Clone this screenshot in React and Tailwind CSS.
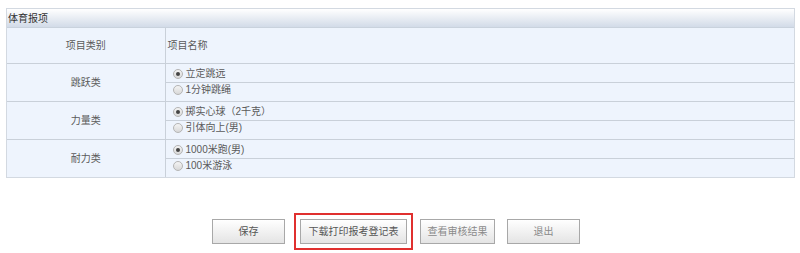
import React from 'react';

const GROUPS = [
  { name: '跳跃类', items: [{ label: '立定跳远', checked: true }, { label: '1分钟跳绳' }] },
  { name: '力量类', items: [{ label: '掷实心球（2千克）', checked: true }, { label: '引体向上(男)' }] },
  { name: '耐力类', items: [{ label: '1000米跑(男)', checked: true }, { label: '100米游泳' }] },
];

function Radio({ checked }) {
  return (
    <span className="inline-flex items-center justify-center w-[10px] h-[10px] rounded-full border border-[#b5b5b5] bg-gradient-to-b from-[#f4f4f4] to-[#d8d8d8] mr-[3px]">
      {checked && <span className="w-[4px] h-[4px] rounded-full bg-[#444]" />}
    </span>
  );
}

function Btn({ children, dim }) {
  return (
    <button
      className={`w-full h-[25px] border border-[#a8a8a8] bg-gradient-to-b from-white to-[#e4e4e4] text-[10px] ${dim ? 'text-[#8a8a8a]' : 'text-[#555]'}`}
    >
      {children}
    </button>
  );
}

export default function App() {
  return (
    <div className="w-[800px] h-[253px] bg-white pt-[8px] pl-[6px] pr-[5px] text-[10px] text-[#5a5a5a]" style={{ fontFamily: '"Liberation Sans", "Noto Sans CJK SC", sans-serif' }}>
      <div className="border border-[#d3d9e1]">
        {/* title */}
        <div className="h-[19px] flex items-center pl-[1px] text-[#333] bg-gradient-to-b from-white to-[#d2dbe8] border-b border-[#c9d2dd]">
          体育报项
        </div>
        <table className="w-full border-collapse bg-[#eef4fd]">
          <tbody>
            <tr className="h-[35px]">
              <td className="w-[158px] text-center border-r border-b border-[#c9d0d9]">项目类别</td>
              <td className="pl-[2px] border-b border-[#c9d0d9]">项目名称</td>
            </tr>
            {GROUPS.map((g, gi) =>
              g.items.map((it, i) => (
                <tr key={g.name + i} className="h-[19px]">
                  {i === 0 && (
                    <td rowSpan={2} className={`text-center border-r border-[#c9d0d9] ${gi < GROUPS.length - 1 ? 'border-b' : ''}`}>
                      {g.name}
                    </td>
                  )}
                  <td className={`pl-[7px] border-[#c9d0d9] ${gi < GROUPS.length - 1 || i === 0 ? 'border-b' : ''}`}>
                    <span className="inline-flex items-center leading-none pt-[1px]">
                      <Radio checked={it.checked} />
                      {it.label}
                    </span>
                  </td>
                </tr>
              ))
            )}
          </tbody>
        </table>
      </div>
      <div className="flex items-center pl-[206px] mt-[35px]">
        <div className="w-[73px]"><Btn>保存</Btn></div>
        <div className="ml-[9px] border-2 border-[#e0302f] p-[4px]">
          <div className="w-[107px]"><Btn>下载打印报考登记表</Btn></div>
        </div>
        <div className="ml-[7px] w-[75px]"><Btn dim>查看审核结果</Btn></div>
        <div className="ml-[12px] w-[73px]"><Btn dim>退出</Btn></div>
      </div>
    </div>
  );
}
